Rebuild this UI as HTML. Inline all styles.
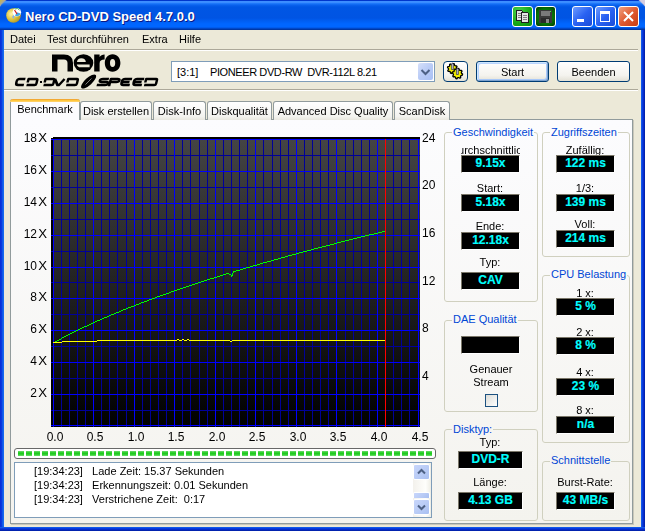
<!DOCTYPE html>
<html><head><meta charset="utf-8">
<style>
*{box-sizing:border-box}
html,body{margin:0;padding:0}
body{filter:contrast(1)}
body{width:645px;height:531px;overflow:hidden;position:relative;background:#ECE9D8;font-family:"Liberation Sans",sans-serif;font-size:11px;color:#000}
.a{position:absolute}
.title{left:0;top:0;width:645px;height:30px;border-radius:7px 7px 0 0;
background:linear-gradient(to bottom,#0036CC 0px,#0036CC 1px,#3D8EFF 1.5px,#3A8CFF 2.5px,#1E78FA 3.5px,#0A62EE 5px,#0056E4 7px,#0054E3 18px,#005EF2 21px,#0066FF 24px,#0066FF 27px,#0052DC 28px,#003DB4 29px,#003092 30px)}
.frameL{left:0;top:30px;width:4px;height:501px;background:linear-gradient(to right,#0831D9 0,#0831D9 1px,#0B46E2 2px,#166AEE 3px,#166AEE 4px)}
.frameR{left:641px;top:30px;width:4px;height:501px;background:linear-gradient(to right,#166AEE 0,#0B46E2 1px,#0831D9 2px,#001EA0 4px)}
.frameB{left:0;top:527px;width:645px;height:4px;background:linear-gradient(to bottom,#166AEE 0,#0B46E2 1px,#0831D9 2px,#001EA0 4px)}
.ttext{left:25px;top:9px;color:#fff;font-weight:bold;font-size:13px;text-shadow:1px 1px 0 #0A1883;letter-spacing:0px}
.menu{top:33px;font-size:11px}
.sep1{left:4px;top:49px;width:634px;height:1px;background:#ACA899}
.sep1w{left:4px;top:50px;width:634px;height:1px;background:#fff}
.sep2{left:4px;top:89px;width:634px;height:1px;background:#ACA899}
.sep2w{left:4px;top:90px;width:634px;height:1px;background:#fff}
.combo{left:171px;top:61px;width:264px;height:21px;border:1px solid #7F9DB9;background:#fff}
.combotext{left:177px;top:66px;white-space:pre}
.ddbtn{left:418px;top:63px;width:15px;height:17px;border-radius:2px;background:linear-gradient(135deg,#D6E0FA,#B9CBF6 50%,#A9C0F4);border:none}
.btn{height:21px;border:1px solid #003C74;border-radius:3px;background:linear-gradient(#FFFFFF,#F4F3EE 70%,#E3E1D6);text-align:center;line-height:21px}
.tab{top:101px;height:19px;border:1px solid #919B9C;border-bottom:none;border-radius:3px 3px 0 0;background:linear-gradient(#FFFFFF,#F3F3EF 80%,#E8E7DE);text-align:center;line-height:16px;padding-top:1px;white-space:nowrap}
.tabsel{top:99px;height:21px;border:1px solid #919B9C;border-top:none;border-bottom:none;border-radius:3px 3px 0 0;background:#FCFCFE;text-align:center;white-space:nowrap}
.panel{left:10px;top:119px;width:623px;height:405px;border:1px solid #919B9C;border-right-color:#919B9C;background:linear-gradient(#FCFCFE,#F4F3EE);box-shadow:1px 1px 0 #C9C7BA}
.yl{position:absolute;left:0;width:47px;text-align:right;font-size:12px;letter-spacing:0px}
.xx{display:inline-block;margin-left:2px;transform:scaleX(1.1);transform-origin:right}
.yr{position:absolute;left:422px;font-size:12px}
.xl{position:absolute;top:430px;width:40px;text-align:center;font-size:12px}
.grp{border:1px solid #D0D0BF;border-radius:3px}
.gt{color:#0046D5;background:#FAFAF9;padding:0 1px;white-space:nowrap;margin-top:1px}
.lbl{text-align:center;white-space:nowrap;overflow:hidden}
.lblc{height:14px;overflow:hidden;white-space:nowrap}
.lblc span{position:absolute;left:50%;transform:translateX(-50%)}
.val{background:#000;border:1px solid #7A7668;border-right-color:#fff;border-bottom-color:#fff;color:#00FFFF;font-weight:bold;font-size:12px;text-align:center;line-height:14px;white-space:nowrap;-webkit-text-stroke:0.15px #00FFFF}
.prog{left:14px;top:448px;width:422px;height:11px;border:1px solid #686868;border-radius:3px;background:#fff}
.log{left:14px;top:462px;width:418px;height:56px;border:1px solid #7F9DB9;background:#fff}
.logline{left:34px;white-space:pre}
.sb{border:1px solid #fff;border-radius:2px;background:linear-gradient(135deg,#C8D6FB,#B7CAF5 60%,#A8BFF2);box-shadow:inset 0 0 0 0 #fff}
</style></head><body>
<div class="a title"></div>
<div class="a frameL"></div>
<div class="a frameR"></div>
<div class="a frameB"></div>
<!-- title icon -->
<div class="a" style="left:0;top:0;width:6px;height:6px;background:linear-gradient(135deg,#C8B840 0,#B0A890 40%,transparent 60%)"></div>
<div class="a" style="left:639px;top:0;width:6px;height:6px;background:linear-gradient(225deg,#D4CCE0 0,#D4CCE0 45%,transparent 60%)"></div>
<svg class="a" style="left:0;top:0" width="26" height="28">
<defs><radialGradient id="gold" cx="0.35" cy="0.4" r="0.7"><stop offset="0" stop-color="#FFF4B0"/><stop offset="0.5" stop-color="#E0C840"/><stop offset="1" stop-color="#B09020"/></radialGradient></defs>
<circle cx="13.5" cy="15.5" r="7.3" fill="url(#gold)"/>
<path d="M12,17 L15,13 L14,19 Z" fill="#8AB0E8"/>
<circle cx="16.8" cy="12.3" r="4.3" fill="#fff"/>
<path d="M16.8,12.3 L20.6,13.5 A4,4 0 0 1 15,15.8 Z" fill="#40A8E8"/>
<path d="M14.5,10 L17,14" stroke="#D02020" stroke-width="1.2"/>
<path d="M15,9 A3.5,3.5 0 0 1 19.5,10" stroke="#40B060" stroke-width="1" fill="none"/>
</svg>
<div class="a ttext">Nero CD-DVD Speed 4.7.0.0</div>
<!-- title buttons -->
<div class="a" style="left:512px;top:6px;width:21px;height:21px;border:1px solid #fff;border-radius:3px;background:radial-gradient(circle at 30% 25%,#4CD04C,#16A816 60%,#0C900C)"></div>
<svg class="a" style="left:512px;top:6px" width="21" height="21" shape-rendering="crispEdges">
<path d="M4.5,4.5 H9.5 L10.5,5.5 V14.5 H4.5 Z" fill="#E4E4E4" stroke="#202020"/>
<path d="M5.5,7.5 H8.5 M5.5,9.5 H8.5 M5.5,11.5 H8.5" stroke="#808080"/>
<path d="M9.5,6.5 H15.5 L16.5,7.5 V16.5 H9.5 Z" fill="#E4E4E4" stroke="#202020"/>
<path d="M11,9.5 H15 M11,11.5 H15 M11,13.5 H15" stroke="#808080"/>
</svg>
<div class="a" style="left:535px;top:6px;width:21px;height:21px;border:1px solid #fff;border-radius:3px;background:radial-gradient(circle at 50% 50%,#0A9A0A,#067006 60%,#033A03)"></div>
<svg class="a" style="left:535px;top:6px" width="21" height="21" shape-rendering="crispEdges">
<rect x="4" y="4" width="13" height="13" fill="#3A3A3A"/>
<rect x="6" y="5" width="9" height="5" fill="#7A7A7A"/>
<rect x="6" y="12" width="9" height="5" fill="#2A2A2A"/>
<rect x="11" y="13" width="3" height="4" fill="#8A8A8A"/>
<rect x="15" y="5" width="1" height="1" fill="#3CFF3C"/>
</svg>
<div class="a" style="left:572px;top:6px;width:21px;height:21px;border:1px solid #fff;border-radius:3px;background:linear-gradient(135deg,#6E9CFF,#2A62F2 50%,#1A4BD8)"></div>
<div class="a" style="left:577px;top:19px;width:7px;height:3px;background:#fff"></div>
<div class="a" style="left:595px;top:6px;width:21px;height:21px;border:1px solid #fff;border-radius:3px;background:linear-gradient(135deg,#6E9CFF,#2A62F2 50%,#1A4BD8)"></div>
<div class="a" style="left:600px;top:11px;width:10px;height:11px;border:1px solid #fff;border-top-width:3px"></div>
<div class="a" style="left:618px;top:6px;width:21px;height:21px;border:1px solid #fff;border-radius:3px;background:linear-gradient(135deg,#F0A080,#E05A30 50%,#C83C10)"></div>
<svg class="a" style="left:618px;top:6px" width="21" height="21"><path d="M6 6 L15 15 M15 6 L6 15" stroke="#fff" stroke-width="2"/></svg>
<!-- menu -->
<div class="a menu" style="left:10px">Datei</div>
<div class="a menu" style="left:47px">Test durchführen</div>
<div class="a menu" style="left:142px">Extra</div>
<div class="a menu" style="left:179px">Hilfe</div>
<div class="a sep1"></div><div class="a sep1w"></div>
<!-- logo -->
<svg class="a" style="left:0;top:50px" width="170" height="40" viewBox="0 50 170 40">
<g fill="#000">
<path d="M52,71.5 V54.5 H64 Q73,54.5 73,63 V71.5 H67.5 V63 Q67.5,59.5 64,59.5 H57.5 V71.5 Z"/>
<ellipse cx="83.5" cy="63" rx="9.8" ry="8.7"/>
<path fill="#ECE9D8" d="M77,62 C77,59.8 78.8,58.2 81.4,58.2 C84,58.2 85.8,59.8 85.8,62 Z"/>
<path fill="#ECE9D8" d="M76.8,64.4 H89.6 V67.3 H80.5 C78.5,67.3 77.1,66.2 76.8,64.4 Z"/>
<path d="M94.2,71.5 V54.5 H99.6 V57 C100.6,55.2 102.2,54.4 104.6,54.4 V59.6 C101.4,59.6 99.6,60.8 99.6,63.4 V71.5 Z"/>
<path fill-rule="evenodd" d="M112.6,54.3 C117.2,54.3 120.4,58 120.4,63 C120.4,68 117.2,71.7 112.6,71.7 C108,71.7 104.8,68 104.8,63 C104.8,58 108,54.3 112.6,54.3 Z M112.6,59 C110.9,59 110,60.6 110,63 C110,65.4 110.9,67 112.6,67 C114.3,67 115.2,65.4 115.2,63 C115.2,60.6 114.3,59 112.6,59 Z"/>
</g>
<g transform="translate(0,86) skewX(-14) translate(0,-86)" fill="none" stroke="#000" stroke-width="2.5" stroke-linejoin="round">
<path d="M23.6,79 H17.8 Q15.5,79 15.5,81.3 V82.7 Q15.5,85 17.8,85 H23.6"/>
<path d="M26.8,82.5 V79 H34.5 Q35.8,79 35.8,80.3 V83.7 Q35.8,85 34.5,85 H26.3"/>
<path d="M43.8,82.5 V79 H51.5 Q52.8,79 52.8,80.3 V83.7 Q52.8,85 51.5,85 H43.3"/>
<path d="M53.2,79 L57.2,85 H58.8 L62.8,79"/>
<path d="M66.5,82.5 V79 H75 Q76.3,79 76.3,80.3 V83.7 Q76.3,85 75,85 H66"/>
<path d="M107.1,79 H101 Q98.5,79 98.5,80.5 Q98.5,82 101,82 H105 Q107.5,82 107.5,83.5 Q107.5,85 105,85 H96.5"/>
<path d="M109.1,86.2 V79 H115.5 Q118,79 118,80.5 Q118,82 115.5,82 H109.1"/>
<path d="M130.3,79 H123.2 Q120.7,79 120.7,81.5 V82.5 Q120.7,85 123.2,85 H129.5 M120.7,82 H128.5"/>
<path d="M142.4,79 H135.3 Q132.8,79 132.8,81.5 V82.5 Q132.8,85 135.3,85 H141.6 M132.8,82 H140.6"/>
<path d="M144.4,82.5 V79 H154.2 Q155.5,79 155.5,80.3 V83.7 Q155.5,85 154.2,85 H143.9"/>
</g>
<rect x="40" y="81" width="2" height="2" fill="#000"/>
<ellipse cx="88.6" cy="81.5" rx="9.6" ry="3.6" transform="rotate(-42 88.6 81.5)" fill="#000"/>
<path d="M85.5,84.5 L91.5,78.5" stroke="#888" stroke-width="0.9"/>
</svg>
<div class="a sep2"></div><div class="a sep2w"></div>
<!-- combo -->
<div class="a combo"></div>
<div class="a combotext">[3:1]</div><div class="a combotext" style="left:210px;letter-spacing:-0.4px">PIONEER DVD-RW  DVR-112L 8.21</div>
<div class="a ddbtn"></div>
<svg class="a" style="left:418px;top:63px" width="15" height="17"><path d="M3.5 7 L7.5 11 L11.5 7" stroke="#4D6185" stroke-width="2" fill="none"/></svg>
<div class="a btn" style="left:443px;top:61px;width:25px;height:21px;border-radius:4px"></div>
<svg class="a" style="left:443px;top:61px" width="25" height="21">
<path d="M14.30,8.59 L14.01,9.53 L12.63,9.78 L12.15,10.37 L12.16,11.77 L11.30,12.23 L10.15,11.43 L9.39,11.50 L8.41,12.50 L7.47,12.21 L7.22,10.83 L6.63,10.35 L5.23,10.36 L4.77,9.50 L5.57,8.35 L5.50,7.59 L4.50,6.61 L4.79,5.67 L6.17,5.42 L6.65,4.83 L6.64,3.43 L7.50,2.97 L8.65,3.77 L9.41,3.70 L10.39,2.70 L11.33,2.99 L11.58,4.37 L12.17,4.85 L13.57,4.84 L14.03,5.70 L13.23,6.85 L13.30,7.61 Z" fill="#F4F000" stroke="#000" stroke-width="1.3" stroke-linejoin="round"/>
<path d="M19.57,13.12 L19.37,14.12 L18.01,14.54 L17.56,15.21 L17.69,16.63 L16.84,17.19 L15.58,16.53 L14.79,16.68 L13.88,17.77 L12.88,17.57 L12.46,16.21 L11.79,15.76 L10.37,15.89 L9.81,15.04 L10.47,13.78 L10.32,12.99 L9.23,12.08 L9.43,11.08 L10.79,10.66 L11.24,9.99 L11.11,8.57 L11.96,8.01 L13.22,8.67 L14.01,8.52 L14.92,7.43 L15.92,7.63 L16.34,8.99 L17.01,9.44 L18.43,9.31 L18.99,10.16 L18.33,11.42 L18.48,12.21 Z" fill="#F4F000" stroke="#000" stroke-width="1.3" stroke-linejoin="round"/>
<path d="M8.4,8.5 V3.5 L9.4,1.8 L10.4,3.5 V8.5 Z" fill="#B8B8C8" stroke="#303040" stroke-width="0.7"/>
<path d="M13.4,13.5 V8.5 L14.4,6.8 L15.4,8.5 V13.5 Z" fill="#B8B8C8" stroke="#303040" stroke-width="0.7"/>
</svg>
<div class="a btn" style="left:476px;top:61px;width:73px;border-color:#003C74;box-shadow:inset 1px 1px 0 #CEE7FF,inset -1px -1px 0 #7DA2CE,inset 2px 2px 0 #B8D4FF,inset -2px -2px 0 #A8C8F8">Start</div>
<div class="a btn" style="left:557px;top:61px;width:73px">Beenden</div>
<!-- tabs -->
<div class="a panel"></div>
<div class="a tab" style="left:80px;width:72px">Disk erstellen</div>
<div class="a tab" style="left:153px;width:53px">Disk-Info</div>
<div class="a tab" style="left:207px;width:65px">Diskqualität</div>
<div class="a tab" style="left:273px;width:120px">Advanced Disc Quality</div>
<div class="a tab" style="left:394px;width:56px">ScanDisk</div>
<div class="a tabsel" style="left:10px;width:70px;line-height:18px;padding-top:1px">Benchmark</div>
<div class="a" style="left:10px;top:99px;width:70px;height:3px;border-radius:3px 3px 0 0;background:linear-gradient(#E68B2C,#FFC73C 1px,#FFC73C 2px,#FFD98A)"></div>
<!-- chart -->
<svg style="position:absolute;left:51px;top:137px" width="369" height="290" shape-rendering="crispEdges">
<defs><linearGradient id="bg" x1="0" y1="0" x2="0" y2="1"><stop offset="0" stop-color="#454545"/><stop offset="1" stop-color="#000"/></linearGradient></defs>
<rect x="0" y="0" width="369" height="290" fill="url(#bg)"/>
<rect x="0" y="0" width="2" height="1" fill="#FCFCFE"/>
<rect x="2" y="0" width="367" height="2" fill="#000"/>
<rect x="0" y="1" width="2" height="1" fill="#000"/>
<rect x="0" y="1" width="2" height="289" fill="#000"/>
<rect x="0" y="18" width="369" height="1" fill="#000099"/>
<rect x="0" y="50" width="369" height="1" fill="#000099"/>
<rect x="0" y="82" width="369" height="1" fill="#000099"/>
<rect x="0" y="114" width="369" height="1" fill="#000099"/>
<rect x="0" y="145" width="369" height="1" fill="#000099"/>
<rect x="0" y="177" width="369" height="1" fill="#000099"/>
<rect x="0" y="209" width="369" height="1" fill="#000099"/>
<rect x="0" y="241" width="369" height="1" fill="#000099"/>
<rect x="0" y="273" width="369" height="1" fill="#000099"/>
<rect x="10" y="2" width="1" height="288" fill="#000099"/>
<rect x="18" y="2" width="1" height="288" fill="#000099"/>
<rect x="26" y="2" width="1" height="288" fill="#000099"/>
<rect x="34" y="2" width="1" height="288" fill="#000099"/>
<rect x="50" y="2" width="1" height="288" fill="#000099"/>
<rect x="58" y="2" width="1" height="288" fill="#000099"/>
<rect x="66" y="2" width="1" height="288" fill="#000099"/>
<rect x="75" y="2" width="1" height="288" fill="#000099"/>
<rect x="91" y="2" width="1" height="288" fill="#000099"/>
<rect x="99" y="2" width="1" height="288" fill="#000099"/>
<rect x="107" y="2" width="1" height="288" fill="#000099"/>
<rect x="115" y="2" width="1" height="288" fill="#000099"/>
<rect x="131" y="2" width="1" height="288" fill="#000099"/>
<rect x="139" y="2" width="1" height="288" fill="#000099"/>
<rect x="148" y="2" width="1" height="288" fill="#000099"/>
<rect x="156" y="2" width="1" height="288" fill="#000099"/>
<rect x="172" y="2" width="1" height="288" fill="#000099"/>
<rect x="180" y="2" width="1" height="288" fill="#000099"/>
<rect x="188" y="2" width="1" height="288" fill="#000099"/>
<rect x="196" y="2" width="1" height="288" fill="#000099"/>
<rect x="212" y="2" width="1" height="288" fill="#000099"/>
<rect x="221" y="2" width="1" height="288" fill="#000099"/>
<rect x="229" y="2" width="1" height="288" fill="#000099"/>
<rect x="237" y="2" width="1" height="288" fill="#000099"/>
<rect x="253" y="2" width="1" height="288" fill="#000099"/>
<rect x="261" y="2" width="1" height="288" fill="#000099"/>
<rect x="269" y="2" width="1" height="288" fill="#000099"/>
<rect x="277" y="2" width="1" height="288" fill="#000099"/>
<rect x="294" y="2" width="1" height="288" fill="#000099"/>
<rect x="302" y="2" width="1" height="288" fill="#000099"/>
<rect x="310" y="2" width="1" height="288" fill="#000099"/>
<rect x="318" y="2" width="1" height="288" fill="#000099"/>
<rect x="334" y="2" width="1" height="288" fill="#000099"/>
<rect x="342" y="2" width="1" height="288" fill="#000099"/>
<rect x="350" y="2" width="1" height="288" fill="#000099"/>
<rect x="358" y="2" width="1" height="288" fill="#000099"/>
<rect x="0" y="2" width="369" height="1" fill="#0000ff"/>
<rect x="0" y="34" width="369" height="1" fill="#0000ff"/>
<rect x="0" y="66" width="369" height="1" fill="#0000ff"/>
<rect x="0" y="98" width="369" height="1" fill="#0000ff"/>
<rect x="0" y="130" width="369" height="1" fill="#0000ff"/>
<rect x="0" y="161" width="369" height="1" fill="#0000ff"/>
<rect x="0" y="193" width="369" height="1" fill="#0000ff"/>
<rect x="0" y="225" width="369" height="1" fill="#0000ff"/>
<rect x="0" y="257" width="369" height="1" fill="#0000ff"/>
<rect x="0" y="288" width="369" height="1" fill="#0000ff"/>
<rect x="2" y="2" width="1" height="288" fill="#0000ff"/>
<rect x="42" y="2" width="1" height="288" fill="#0000ff"/>
<rect x="83" y="2" width="1" height="288" fill="#0000ff"/>
<rect x="123" y="2" width="1" height="288" fill="#0000ff"/>
<rect x="164" y="2" width="1" height="288" fill="#0000ff"/>
<rect x="204" y="2" width="1" height="288" fill="#0000ff"/>
<rect x="245" y="2" width="1" height="288" fill="#0000ff"/>
<rect x="285" y="2" width="1" height="288" fill="#0000ff"/>
<rect x="326" y="2" width="1" height="288" fill="#0000ff"/>
<rect x="367" y="2" width="1" height="288" fill="#0000ff"/>
<rect x="367" y="2" width="1" height="288" fill="#0000ff"/>
<rect x="334" y="2" width="1" height="288" fill="#ff0000"/>
<rect x="2" y="205" width="1" height="1" fill="#00FF00"/>
<rect x="3" y="205" width="1" height="1" fill="#00FF00"/>
<rect x="4" y="204" width="1" height="1" fill="#00FF00"/>
<rect x="5" y="204" width="1" height="1" fill="#00FF00"/>
<rect x="6" y="203" width="1" height="1" fill="#00FF00"/>
<rect x="7" y="203" width="1" height="1" fill="#00FF00"/>
<rect x="8" y="202" width="1" height="1" fill="#00FF00"/>
<rect x="9" y="202" width="1" height="1" fill="#00FF00"/>
<rect x="10" y="201" width="1" height="1" fill="#00FF00"/>
<rect x="11" y="200" width="1" height="1" fill="#00FF00"/>
<rect x="12" y="200" width="1" height="1" fill="#00FF00"/>
<rect x="13" y="199" width="1" height="1" fill="#00FF00"/>
<rect x="14" y="199" width="1" height="1" fill="#00FF00"/>
<rect x="15" y="198" width="1" height="1" fill="#00FF00"/>
<rect x="16" y="198" width="1" height="1" fill="#00FF00"/>
<rect x="17" y="197" width="1" height="1" fill="#00FF00"/>
<rect x="18" y="197" width="1" height="1" fill="#00FF00"/>
<rect x="19" y="196" width="1" height="1" fill="#00FF00"/>
<rect x="20" y="196" width="1" height="1" fill="#00FF00"/>
<rect x="21" y="195" width="1" height="1" fill="#00FF00"/>
<rect x="22" y="195" width="1" height="1" fill="#00FF00"/>
<rect x="23" y="194" width="1" height="1" fill="#00FF00"/>
<rect x="24" y="194" width="1" height="1" fill="#00FF00"/>
<rect x="25" y="193" width="1" height="1" fill="#00FF00"/>
<rect x="26" y="193" width="1" height="1" fill="#00FF00"/>
<rect x="27" y="192" width="1" height="1" fill="#00FF00"/>
<rect x="28" y="192" width="1" height="1" fill="#00FF00"/>
<rect x="29" y="191" width="1" height="1" fill="#00FF00"/>
<rect x="30" y="191" width="1" height="1" fill="#00FF00"/>
<rect x="31" y="190" width="1" height="1" fill="#00FF00"/>
<rect x="32" y="190" width="1" height="1" fill="#00FF00"/>
<rect x="33" y="189" width="1" height="1" fill="#00FF00"/>
<rect x="34" y="189" width="1" height="1" fill="#00FF00"/>
<rect x="35" y="189" width="1" height="1" fill="#00FF00"/>
<rect x="36" y="188" width="1" height="1" fill="#00FF00"/>
<rect x="37" y="188" width="1" height="1" fill="#00FF00"/>
<rect x="38" y="187" width="1" height="1" fill="#00FF00"/>
<rect x="39" y="187" width="1" height="1" fill="#00FF00"/>
<rect x="40" y="186" width="1" height="1" fill="#00FF00"/>
<rect x="41" y="186" width="1" height="1" fill="#00FF00"/>
<rect x="42" y="185" width="1" height="1" fill="#00FF00"/>
<rect x="43" y="185" width="1" height="1" fill="#00FF00"/>
<rect x="44" y="184" width="1" height="1" fill="#00FF00"/>
<rect x="45" y="184" width="1" height="1" fill="#00FF00"/>
<rect x="46" y="183" width="1" height="1" fill="#00FF00"/>
<rect x="47" y="183" width="1" height="1" fill="#00FF00"/>
<rect x="48" y="183" width="1" height="1" fill="#00FF00"/>
<rect x="49" y="182" width="1" height="1" fill="#00FF00"/>
<rect x="50" y="182" width="1" height="1" fill="#00FF00"/>
<rect x="51" y="181" width="1" height="1" fill="#00FF00"/>
<rect x="52" y="181" width="1" height="1" fill="#00FF00"/>
<rect x="53" y="180" width="1" height="1" fill="#00FF00"/>
<rect x="54" y="180" width="1" height="1" fill="#00FF00"/>
<rect x="55" y="180" width="1" height="1" fill="#00FF00"/>
<rect x="56" y="179" width="1" height="1" fill="#00FF00"/>
<rect x="57" y="179" width="1" height="1" fill="#00FF00"/>
<rect x="58" y="178" width="1" height="1" fill="#00FF00"/>
<rect x="59" y="178" width="1" height="1" fill="#00FF00"/>
<rect x="60" y="177" width="1" height="1" fill="#00FF00"/>
<rect x="61" y="177" width="1" height="1" fill="#00FF00"/>
<rect x="62" y="177" width="1" height="1" fill="#00FF00"/>
<rect x="63" y="176" width="1" height="1" fill="#00FF00"/>
<rect x="64" y="176" width="1" height="1" fill="#00FF00"/>
<rect x="65" y="175" width="1" height="1" fill="#00FF00"/>
<rect x="66" y="175" width="1" height="1" fill="#00FF00"/>
<rect x="67" y="175" width="1" height="1" fill="#00FF00"/>
<rect x="68" y="174" width="1" height="1" fill="#00FF00"/>
<rect x="69" y="174" width="1" height="1" fill="#00FF00"/>
<rect x="70" y="173" width="1" height="1" fill="#00FF00"/>
<rect x="71" y="173" width="1" height="1" fill="#00FF00"/>
<rect x="72" y="172" width="1" height="1" fill="#00FF00"/>
<rect x="73" y="172" width="1" height="1" fill="#00FF00"/>
<rect x="74" y="172" width="1" height="1" fill="#00FF00"/>
<rect x="75" y="171" width="1" height="1" fill="#00FF00"/>
<rect x="76" y="171" width="1" height="1" fill="#00FF00"/>
<rect x="77" y="170" width="1" height="1" fill="#00FF00"/>
<rect x="78" y="170" width="1" height="1" fill="#00FF00"/>
<rect x="79" y="170" width="1" height="1" fill="#00FF00"/>
<rect x="80" y="169" width="1" height="1" fill="#00FF00"/>
<rect x="81" y="169" width="1" height="1" fill="#00FF00"/>
<rect x="82" y="169" width="1" height="1" fill="#00FF00"/>
<rect x="83" y="168" width="1" height="1" fill="#00FF00"/>
<rect x="84" y="168" width="1" height="1" fill="#00FF00"/>
<rect x="85" y="167" width="1" height="1" fill="#00FF00"/>
<rect x="86" y="167" width="1" height="1" fill="#00FF00"/>
<rect x="87" y="167" width="1" height="1" fill="#00FF00"/>
<rect x="88" y="166" width="1" height="1" fill="#00FF00"/>
<rect x="89" y="166" width="1" height="1" fill="#00FF00"/>
<rect x="90" y="165" width="1" height="1" fill="#00FF00"/>
<rect x="91" y="165" width="1" height="1" fill="#00FF00"/>
<rect x="92" y="165" width="1" height="1" fill="#00FF00"/>
<rect x="93" y="164" width="1" height="1" fill="#00FF00"/>
<rect x="94" y="164" width="1" height="1" fill="#00FF00"/>
<rect x="95" y="164" width="1" height="1" fill="#00FF00"/>
<rect x="96" y="163" width="1" height="1" fill="#00FF00"/>
<rect x="97" y="163" width="1" height="1" fill="#00FF00"/>
<rect x="98" y="162" width="1" height="1" fill="#00FF00"/>
<rect x="99" y="162" width="1" height="1" fill="#00FF00"/>
<rect x="100" y="162" width="1" height="1" fill="#00FF00"/>
<rect x="101" y="161" width="1" height="1" fill="#00FF00"/>
<rect x="102" y="161" width="1" height="1" fill="#00FF00"/>
<rect x="103" y="161" width="1" height="1" fill="#00FF00"/>
<rect x="104" y="160" width="1" height="1" fill="#00FF00"/>
<rect x="105" y="160" width="1" height="1" fill="#00FF00"/>
<rect x="106" y="159" width="1" height="1" fill="#00FF00"/>
<rect x="107" y="159" width="1" height="1" fill="#00FF00"/>
<rect x="108" y="159" width="1" height="1" fill="#00FF00"/>
<rect x="109" y="158" width="1" height="1" fill="#00FF00"/>
<rect x="110" y="158" width="1" height="1" fill="#00FF00"/>
<rect x="111" y="158" width="1" height="1" fill="#00FF00"/>
<rect x="112" y="157" width="1" height="1" fill="#00FF00"/>
<rect x="113" y="157" width="1" height="1" fill="#00FF00"/>
<rect x="114" y="157" width="1" height="1" fill="#00FF00"/>
<rect x="115" y="156" width="1" height="1" fill="#00FF00"/>
<rect x="116" y="156" width="1" height="1" fill="#00FF00"/>
<rect x="117" y="156" width="1" height="1" fill="#00FF00"/>
<rect x="118" y="155" width="1" height="1" fill="#00FF00"/>
<rect x="119" y="155" width="1" height="1" fill="#00FF00"/>
<rect x="120" y="154" width="1" height="1" fill="#00FF00"/>
<rect x="121" y="154" width="1" height="1" fill="#00FF00"/>
<rect x="122" y="154" width="1" height="1" fill="#00FF00"/>
<rect x="123" y="153" width="1" height="1" fill="#00FF00"/>
<rect x="124" y="153" width="1" height="1" fill="#00FF00"/>
<rect x="125" y="153" width="1" height="1" fill="#00FF00"/>
<rect x="126" y="152" width="1" height="1" fill="#00FF00"/>
<rect x="127" y="152" width="1" height="1" fill="#00FF00"/>
<rect x="128" y="152" width="1" height="1" fill="#00FF00"/>
<rect x="129" y="151" width="1" height="1" fill="#00FF00"/>
<rect x="130" y="151" width="1" height="1" fill="#00FF00"/>
<rect x="131" y="151" width="1" height="1" fill="#00FF00"/>
<rect x="132" y="150" width="1" height="1" fill="#00FF00"/>
<rect x="133" y="150" width="1" height="1" fill="#00FF00"/>
<rect x="134" y="150" width="1" height="1" fill="#00FF00"/>
<rect x="135" y="149" width="1" height="1" fill="#00FF00"/>
<rect x="136" y="149" width="1" height="1" fill="#00FF00"/>
<rect x="137" y="149" width="1" height="1" fill="#00FF00"/>
<rect x="138" y="148" width="1" height="1" fill="#00FF00"/>
<rect x="139" y="148" width="1" height="1" fill="#00FF00"/>
<rect x="140" y="148" width="1" height="1" fill="#00FF00"/>
<rect x="141" y="147" width="1" height="1" fill="#00FF00"/>
<rect x="142" y="147" width="1" height="1" fill="#00FF00"/>
<rect x="143" y="147" width="1" height="1" fill="#00FF00"/>
<rect x="144" y="146" width="1" height="1" fill="#00FF00"/>
<rect x="145" y="146" width="1" height="1" fill="#00FF00"/>
<rect x="146" y="146" width="1" height="1" fill="#00FF00"/>
<rect x="147" y="145" width="1" height="1" fill="#00FF00"/>
<rect x="148" y="145" width="1" height="1" fill="#00FF00"/>
<rect x="149" y="145" width="1" height="1" fill="#00FF00"/>
<rect x="150" y="144" width="1" height="1" fill="#00FF00"/>
<rect x="151" y="144" width="1" height="1" fill="#00FF00"/>
<rect x="152" y="144" width="1" height="1" fill="#00FF00"/>
<rect x="153" y="143" width="1" height="1" fill="#00FF00"/>
<rect x="154" y="143" width="1" height="1" fill="#00FF00"/>
<rect x="155" y="143" width="1" height="1" fill="#00FF00"/>
<rect x="156" y="142" width="1" height="1" fill="#00FF00"/>
<rect x="157" y="142" width="1" height="1" fill="#00FF00"/>
<rect x="158" y="142" width="1" height="1" fill="#00FF00"/>
<rect x="159" y="141" width="1" height="1" fill="#00FF00"/>
<rect x="160" y="141" width="1" height="1" fill="#00FF00"/>
<rect x="161" y="141" width="1" height="1" fill="#00FF00"/>
<rect x="162" y="141" width="1" height="1" fill="#00FF00"/>
<rect x="163" y="140" width="1" height="1" fill="#00FF00"/>
<rect x="164" y="140" width="1" height="1" fill="#00FF00"/>
<rect x="165" y="140" width="1" height="1" fill="#00FF00"/>
<rect x="166" y="139" width="1" height="1" fill="#00FF00"/>
<rect x="167" y="139" width="1" height="1" fill="#00FF00"/>
<rect x="168" y="139" width="1" height="1" fill="#00FF00"/>
<rect x="169" y="138" width="1" height="1" fill="#00FF00"/>
<rect x="170" y="138" width="1" height="1" fill="#00FF00"/>
<rect x="171" y="138" width="1" height="1" fill="#00FF00"/>
<rect x="172" y="137" width="1" height="1" fill="#00FF00"/>
<rect x="173" y="137" width="1" height="1" fill="#00FF00"/>
<rect x="174" y="137" width="1" height="1" fill="#00FF00"/>
<rect x="175" y="136" width="1" height="1" fill="#00FF00"/>
<rect x="176" y="136" width="1" height="1" fill="#00FF00"/>
<rect x="177" y="136" width="1" height="1" fill="#00FF00"/>
<rect x="178" y="137" width="1" height="1" fill="#00FF00"/>
<rect x="179" y="137" width="1" height="1" fill="#00FF00"/>
<rect x="180" y="138" width="1" height="2" fill="#00FF00"/>
<rect x="181" y="136" width="1" height="3" fill="#00FF00"/>
<rect x="182" y="134" width="1" height="2" fill="#00FF00"/>
<rect x="183" y="134" width="1" height="1" fill="#00FF00"/>
<rect x="184" y="134" width="1" height="1" fill="#00FF00"/>
<rect x="185" y="133" width="1" height="1" fill="#00FF00"/>
<rect x="186" y="133" width="1" height="1" fill="#00FF00"/>
<rect x="187" y="133" width="1" height="1" fill="#00FF00"/>
<rect x="188" y="133" width="1" height="1" fill="#00FF00"/>
<rect x="189" y="132" width="1" height="1" fill="#00FF00"/>
<rect x="190" y="132" width="1" height="1" fill="#00FF00"/>
<rect x="191" y="132" width="1" height="1" fill="#00FF00"/>
<rect x="192" y="131" width="1" height="1" fill="#00FF00"/>
<rect x="193" y="131" width="1" height="1" fill="#00FF00"/>
<rect x="194" y="131" width="1" height="1" fill="#00FF00"/>
<rect x="195" y="130" width="1" height="1" fill="#00FF00"/>
<rect x="196" y="130" width="1" height="1" fill="#00FF00"/>
<rect x="197" y="130" width="1" height="1" fill="#00FF00"/>
<rect x="198" y="130" width="1" height="1" fill="#00FF00"/>
<rect x="199" y="129" width="1" height="1" fill="#00FF00"/>
<rect x="200" y="129" width="1" height="1" fill="#00FF00"/>
<rect x="201" y="129" width="1" height="1" fill="#00FF00"/>
<rect x="202" y="128" width="1" height="1" fill="#00FF00"/>
<rect x="203" y="128" width="1" height="1" fill="#00FF00"/>
<rect x="204" y="128" width="1" height="1" fill="#00FF00"/>
<rect x="205" y="128" width="1" height="1" fill="#00FF00"/>
<rect x="206" y="127" width="1" height="1" fill="#00FF00"/>
<rect x="207" y="127" width="1" height="1" fill="#00FF00"/>
<rect x="208" y="127" width="1" height="1" fill="#00FF00"/>
<rect x="209" y="126" width="1" height="1" fill="#00FF00"/>
<rect x="210" y="126" width="1" height="1" fill="#00FF00"/>
<rect x="211" y="126" width="1" height="1" fill="#00FF00"/>
<rect x="212" y="125" width="1" height="1" fill="#00FF00"/>
<rect x="213" y="125" width="1" height="1" fill="#00FF00"/>
<rect x="214" y="125" width="1" height="1" fill="#00FF00"/>
<rect x="215" y="125" width="1" height="1" fill="#00FF00"/>
<rect x="216" y="124" width="1" height="1" fill="#00FF00"/>
<rect x="217" y="124" width="1" height="1" fill="#00FF00"/>
<rect x="218" y="124" width="1" height="1" fill="#00FF00"/>
<rect x="219" y="124" width="1" height="1" fill="#00FF00"/>
<rect x="220" y="123" width="1" height="1" fill="#00FF00"/>
<rect x="221" y="123" width="1" height="1" fill="#00FF00"/>
<rect x="222" y="123" width="1" height="1" fill="#00FF00"/>
<rect x="223" y="122" width="1" height="1" fill="#00FF00"/>
<rect x="224" y="122" width="1" height="1" fill="#00FF00"/>
<rect x="225" y="122" width="1" height="1" fill="#00FF00"/>
<rect x="226" y="122" width="1" height="1" fill="#00FF00"/>
<rect x="227" y="121" width="1" height="1" fill="#00FF00"/>
<rect x="228" y="121" width="1" height="1" fill="#00FF00"/>
<rect x="229" y="121" width="1" height="1" fill="#00FF00"/>
<rect x="230" y="120" width="1" height="1" fill="#00FF00"/>
<rect x="231" y="120" width="1" height="1" fill="#00FF00"/>
<rect x="232" y="120" width="1" height="1" fill="#00FF00"/>
<rect x="233" y="120" width="1" height="1" fill="#00FF00"/>
<rect x="234" y="119" width="1" height="1" fill="#00FF00"/>
<rect x="235" y="119" width="1" height="1" fill="#00FF00"/>
<rect x="236" y="119" width="1" height="1" fill="#00FF00"/>
<rect x="237" y="118" width="1" height="1" fill="#00FF00"/>
<rect x="238" y="118" width="1" height="1" fill="#00FF00"/>
<rect x="239" y="118" width="1" height="1" fill="#00FF00"/>
<rect x="240" y="118" width="1" height="1" fill="#00FF00"/>
<rect x="241" y="117" width="1" height="1" fill="#00FF00"/>
<rect x="242" y="117" width="1" height="1" fill="#00FF00"/>
<rect x="243" y="117" width="1" height="1" fill="#00FF00"/>
<rect x="244" y="117" width="1" height="1" fill="#00FF00"/>
<rect x="245" y="116" width="1" height="1" fill="#00FF00"/>
<rect x="246" y="116" width="1" height="1" fill="#00FF00"/>
<rect x="247" y="116" width="1" height="1" fill="#00FF00"/>
<rect x="248" y="115" width="1" height="1" fill="#00FF00"/>
<rect x="249" y="115" width="1" height="1" fill="#00FF00"/>
<rect x="250" y="115" width="1" height="1" fill="#00FF00"/>
<rect x="251" y="115" width="1" height="1" fill="#00FF00"/>
<rect x="252" y="114" width="1" height="1" fill="#00FF00"/>
<rect x="253" y="114" width="1" height="1" fill="#00FF00"/>
<rect x="254" y="114" width="1" height="1" fill="#00FF00"/>
<rect x="255" y="114" width="1" height="1" fill="#00FF00"/>
<rect x="256" y="113" width="1" height="1" fill="#00FF00"/>
<rect x="257" y="113" width="1" height="1" fill="#00FF00"/>
<rect x="258" y="113" width="1" height="1" fill="#00FF00"/>
<rect x="259" y="113" width="1" height="1" fill="#00FF00"/>
<rect x="260" y="112" width="1" height="1" fill="#00FF00"/>
<rect x="261" y="112" width="1" height="1" fill="#00FF00"/>
<rect x="262" y="112" width="1" height="1" fill="#00FF00"/>
<rect x="263" y="111" width="1" height="1" fill="#00FF00"/>
<rect x="264" y="111" width="1" height="1" fill="#00FF00"/>
<rect x="265" y="111" width="1" height="1" fill="#00FF00"/>
<rect x="266" y="111" width="1" height="1" fill="#00FF00"/>
<rect x="267" y="110" width="1" height="1" fill="#00FF00"/>
<rect x="268" y="110" width="1" height="1" fill="#00FF00"/>
<rect x="269" y="110" width="1" height="1" fill="#00FF00"/>
<rect x="270" y="110" width="1" height="1" fill="#00FF00"/>
<rect x="271" y="109" width="1" height="1" fill="#00FF00"/>
<rect x="272" y="109" width="1" height="1" fill="#00FF00"/>
<rect x="273" y="109" width="1" height="1" fill="#00FF00"/>
<rect x="274" y="109" width="1" height="1" fill="#00FF00"/>
<rect x="275" y="108" width="1" height="1" fill="#00FF00"/>
<rect x="276" y="108" width="1" height="1" fill="#00FF00"/>
<rect x="277" y="108" width="1" height="1" fill="#00FF00"/>
<rect x="278" y="108" width="1" height="1" fill="#00FF00"/>
<rect x="279" y="107" width="1" height="1" fill="#00FF00"/>
<rect x="280" y="107" width="1" height="1" fill="#00FF00"/>
<rect x="281" y="107" width="1" height="1" fill="#00FF00"/>
<rect x="282" y="107" width="1" height="1" fill="#00FF00"/>
<rect x="283" y="106" width="1" height="1" fill="#00FF00"/>
<rect x="284" y="106" width="1" height="1" fill="#00FF00"/>
<rect x="285" y="106" width="1" height="1" fill="#00FF00"/>
<rect x="286" y="105" width="1" height="1" fill="#00FF00"/>
<rect x="287" y="105" width="1" height="1" fill="#00FF00"/>
<rect x="288" y="105" width="1" height="1" fill="#00FF00"/>
<rect x="289" y="105" width="1" height="1" fill="#00FF00"/>
<rect x="290" y="104" width="1" height="1" fill="#00FF00"/>
<rect x="291" y="104" width="1" height="1" fill="#00FF00"/>
<rect x="292" y="104" width="1" height="1" fill="#00FF00"/>
<rect x="293" y="104" width="1" height="1" fill="#00FF00"/>
<rect x="294" y="103" width="1" height="1" fill="#00FF00"/>
<rect x="295" y="103" width="1" height="1" fill="#00FF00"/>
<rect x="296" y="103" width="1" height="1" fill="#00FF00"/>
<rect x="297" y="103" width="1" height="1" fill="#00FF00"/>
<rect x="298" y="102" width="1" height="1" fill="#00FF00"/>
<rect x="299" y="102" width="1" height="1" fill="#00FF00"/>
<rect x="300" y="102" width="1" height="1" fill="#00FF00"/>
<rect x="301" y="102" width="1" height="1" fill="#00FF00"/>
<rect x="302" y="101" width="1" height="1" fill="#00FF00"/>
<rect x="303" y="101" width="1" height="1" fill="#00FF00"/>
<rect x="304" y="101" width="1" height="1" fill="#00FF00"/>
<rect x="305" y="101" width="1" height="1" fill="#00FF00"/>
<rect x="306" y="100" width="1" height="1" fill="#00FF00"/>
<rect x="307" y="100" width="1" height="1" fill="#00FF00"/>
<rect x="308" y="100" width="1" height="1" fill="#00FF00"/>
<rect x="309" y="100" width="1" height="1" fill="#00FF00"/>
<rect x="310" y="99" width="1" height="1" fill="#00FF00"/>
<rect x="311" y="99" width="1" height="1" fill="#00FF00"/>
<rect x="312" y="99" width="1" height="1" fill="#00FF00"/>
<rect x="313" y="99" width="1" height="1" fill="#00FF00"/>
<rect x="314" y="98" width="1" height="1" fill="#00FF00"/>
<rect x="315" y="98" width="1" height="1" fill="#00FF00"/>
<rect x="316" y="98" width="1" height="1" fill="#00FF00"/>
<rect x="317" y="98" width="1" height="1" fill="#00FF00"/>
<rect x="318" y="97" width="1" height="1" fill="#00FF00"/>
<rect x="319" y="97" width="1" height="1" fill="#00FF00"/>
<rect x="320" y="97" width="1" height="1" fill="#00FF00"/>
<rect x="321" y="97" width="1" height="1" fill="#00FF00"/>
<rect x="322" y="97" width="1" height="1" fill="#00FF00"/>
<rect x="323" y="96" width="1" height="1" fill="#00FF00"/>
<rect x="324" y="96" width="1" height="1" fill="#00FF00"/>
<rect x="325" y="96" width="1" height="1" fill="#00FF00"/>
<rect x="326" y="96" width="1" height="1" fill="#00FF00"/>
<rect x="327" y="95" width="1" height="1" fill="#00FF00"/>
<rect x="328" y="95" width="1" height="1" fill="#00FF00"/>
<rect x="329" y="95" width="1" height="1" fill="#00FF00"/>
<rect x="330" y="95" width="1" height="1" fill="#00FF00"/>
<rect x="331" y="94" width="1" height="1" fill="#00FF00"/>
<rect x="332" y="94" width="1" height="1" fill="#00FF00"/>
<rect x="333" y="94" width="1" height="1" fill="#00FF00"/>
<rect x="2" y="205" width="1" height="1" fill="#FFFF00"/>
<rect x="3" y="205" width="1" height="1" fill="#FFFF00"/>
<rect x="4" y="205" width="1" height="1" fill="#FFFF00"/>
<rect x="5" y="205" width="1" height="1" fill="#FFFF00"/>
<rect x="6" y="205" width="1" height="1" fill="#FFFF00"/>
<rect x="7" y="205" width="1" height="1" fill="#FFFF00"/>
<rect x="8" y="205" width="1" height="1" fill="#FFFF00"/>
<rect x="9" y="205" width="1" height="1" fill="#FFFF00"/>
<rect x="10" y="205" width="1" height="1" fill="#FFFF00"/>
<rect x="11" y="204" width="1" height="1" fill="#FFFF00"/>
<rect x="12" y="204" width="1" height="1" fill="#FFFF00"/>
<rect x="13" y="204" width="1" height="1" fill="#FFFF00"/>
<rect x="14" y="204" width="1" height="1" fill="#FFFF00"/>
<rect x="15" y="204" width="1" height="1" fill="#FFFF00"/>
<rect x="16" y="204" width="1" height="1" fill="#FFFF00"/>
<rect x="17" y="204" width="1" height="1" fill="#FFFF00"/>
<rect x="18" y="204" width="1" height="1" fill="#FFFF00"/>
<rect x="19" y="204" width="1" height="1" fill="#FFFF00"/>
<rect x="20" y="204" width="1" height="1" fill="#FFFF00"/>
<rect x="21" y="204" width="1" height="1" fill="#FFFF00"/>
<rect x="22" y="204" width="1" height="1" fill="#FFFF00"/>
<rect x="23" y="204" width="1" height="1" fill="#FFFF00"/>
<rect x="24" y="204" width="1" height="1" fill="#FFFF00"/>
<rect x="25" y="204" width="1" height="1" fill="#FFFF00"/>
<rect x="26" y="204" width="1" height="1" fill="#FFFF00"/>
<rect x="27" y="204" width="1" height="1" fill="#FFFF00"/>
<rect x="28" y="204" width="1" height="1" fill="#FFFF00"/>
<rect x="29" y="204" width="1" height="1" fill="#FFFF00"/>
<rect x="30" y="204" width="1" height="1" fill="#FFFF00"/>
<rect x="31" y="204" width="1" height="1" fill="#FFFF00"/>
<rect x="32" y="204" width="1" height="1" fill="#FFFF00"/>
<rect x="33" y="204" width="1" height="1" fill="#FFFF00"/>
<rect x="34" y="204" width="1" height="1" fill="#FFFF00"/>
<rect x="35" y="204" width="1" height="1" fill="#FFFF00"/>
<rect x="36" y="204" width="1" height="1" fill="#FFFF00"/>
<rect x="37" y="204" width="1" height="1" fill="#FFFF00"/>
<rect x="38" y="204" width="1" height="1" fill="#FFFF00"/>
<rect x="39" y="204" width="1" height="1" fill="#FFFF00"/>
<rect x="40" y="204" width="1" height="1" fill="#FFFF00"/>
<rect x="41" y="204" width="1" height="1" fill="#FFFF00"/>
<rect x="42" y="204" width="1" height="1" fill="#FFFF00"/>
<rect x="43" y="204" width="1" height="1" fill="#FFFF00"/>
<rect x="44" y="204" width="1" height="1" fill="#FFFF00"/>
<rect x="45" y="204" width="1" height="1" fill="#FFFF00"/>
<rect x="46" y="203" width="1" height="1" fill="#FFFF00"/>
<rect x="47" y="203" width="1" height="1" fill="#FFFF00"/>
<rect x="48" y="203" width="1" height="1" fill="#FFFF00"/>
<rect x="49" y="203" width="1" height="1" fill="#FFFF00"/>
<rect x="50" y="203" width="1" height="1" fill="#FFFF00"/>
<rect x="51" y="203" width="1" height="1" fill="#FFFF00"/>
<rect x="52" y="203" width="1" height="1" fill="#FFFF00"/>
<rect x="53" y="203" width="1" height="1" fill="#FFFF00"/>
<rect x="54" y="203" width="1" height="1" fill="#FFFF00"/>
<rect x="55" y="203" width="1" height="1" fill="#FFFF00"/>
<rect x="56" y="203" width="1" height="1" fill="#FFFF00"/>
<rect x="57" y="203" width="1" height="1" fill="#FFFF00"/>
<rect x="58" y="203" width="1" height="1" fill="#FFFF00"/>
<rect x="59" y="203" width="1" height="1" fill="#FFFF00"/>
<rect x="60" y="203" width="1" height="1" fill="#FFFF00"/>
<rect x="61" y="203" width="1" height="1" fill="#FFFF00"/>
<rect x="62" y="203" width="1" height="1" fill="#FFFF00"/>
<rect x="63" y="203" width="1" height="1" fill="#FFFF00"/>
<rect x="64" y="203" width="1" height="1" fill="#FFFF00"/>
<rect x="65" y="203" width="1" height="1" fill="#FFFF00"/>
<rect x="66" y="203" width="1" height="1" fill="#FFFF00"/>
<rect x="67" y="203" width="1" height="1" fill="#FFFF00"/>
<rect x="68" y="203" width="1" height="1" fill="#FFFF00"/>
<rect x="69" y="203" width="1" height="1" fill="#FFFF00"/>
<rect x="70" y="203" width="1" height="1" fill="#FFFF00"/>
<rect x="71" y="203" width="1" height="1" fill="#FFFF00"/>
<rect x="72" y="203" width="1" height="1" fill="#FFFF00"/>
<rect x="73" y="203" width="1" height="1" fill="#FFFF00"/>
<rect x="74" y="203" width="1" height="1" fill="#FFFF00"/>
<rect x="75" y="203" width="1" height="1" fill="#FFFF00"/>
<rect x="76" y="203" width="1" height="1" fill="#FFFF00"/>
<rect x="77" y="203" width="1" height="1" fill="#FFFF00"/>
<rect x="78" y="203" width="1" height="1" fill="#FFFF00"/>
<rect x="79" y="203" width="1" height="1" fill="#FFFF00"/>
<rect x="80" y="203" width="1" height="1" fill="#FFFF00"/>
<rect x="81" y="203" width="1" height="1" fill="#FFFF00"/>
<rect x="82" y="203" width="1" height="1" fill="#FFFF00"/>
<rect x="83" y="203" width="1" height="1" fill="#FFFF00"/>
<rect x="84" y="203" width="1" height="1" fill="#FFFF00"/>
<rect x="85" y="203" width="1" height="1" fill="#FFFF00"/>
<rect x="86" y="203" width="1" height="1" fill="#FFFF00"/>
<rect x="87" y="203" width="1" height="1" fill="#FFFF00"/>
<rect x="88" y="203" width="1" height="1" fill="#FFFF00"/>
<rect x="89" y="203" width="1" height="1" fill="#FFFF00"/>
<rect x="90" y="203" width="1" height="1" fill="#FFFF00"/>
<rect x="91" y="203" width="1" height="1" fill="#FFFF00"/>
<rect x="92" y="203" width="1" height="1" fill="#FFFF00"/>
<rect x="93" y="203" width="1" height="1" fill="#FFFF00"/>
<rect x="94" y="203" width="1" height="1" fill="#FFFF00"/>
<rect x="95" y="203" width="1" height="1" fill="#FFFF00"/>
<rect x="96" y="203" width="1" height="1" fill="#FFFF00"/>
<rect x="97" y="203" width="1" height="1" fill="#FFFF00"/>
<rect x="98" y="203" width="1" height="1" fill="#FFFF00"/>
<rect x="99" y="203" width="1" height="1" fill="#FFFF00"/>
<rect x="100" y="203" width="1" height="1" fill="#FFFF00"/>
<rect x="101" y="203" width="1" height="1" fill="#FFFF00"/>
<rect x="102" y="203" width="1" height="1" fill="#FFFF00"/>
<rect x="103" y="203" width="1" height="1" fill="#FFFF00"/>
<rect x="104" y="203" width="1" height="1" fill="#FFFF00"/>
<rect x="105" y="203" width="1" height="1" fill="#FFFF00"/>
<rect x="106" y="203" width="1" height="1" fill="#FFFF00"/>
<rect x="107" y="203" width="1" height="1" fill="#FFFF00"/>
<rect x="108" y="203" width="1" height="1" fill="#FFFF00"/>
<rect x="109" y="203" width="1" height="1" fill="#FFFF00"/>
<rect x="110" y="203" width="1" height="1" fill="#FFFF00"/>
<rect x="111" y="203" width="1" height="1" fill="#FFFF00"/>
<rect x="112" y="203" width="1" height="1" fill="#FFFF00"/>
<rect x="113" y="203" width="1" height="1" fill="#FFFF00"/>
<rect x="114" y="203" width="1" height="1" fill="#FFFF00"/>
<rect x="115" y="203" width="1" height="1" fill="#FFFF00"/>
<rect x="116" y="203" width="1" height="1" fill="#FFFF00"/>
<rect x="117" y="203" width="1" height="1" fill="#FFFF00"/>
<rect x="118" y="203" width="1" height="1" fill="#FFFF00"/>
<rect x="119" y="203" width="1" height="1" fill="#FFFF00"/>
<rect x="120" y="203" width="1" height="1" fill="#FFFF00"/>
<rect x="121" y="203" width="1" height="1" fill="#FFFF00"/>
<rect x="122" y="203" width="1" height="1" fill="#FFFF00"/>
<rect x="123" y="203" width="1" height="1" fill="#FFFF00"/>
<rect x="124" y="203" width="1" height="1" fill="#FFFF00"/>
<rect x="125" y="203" width="1" height="1" fill="#FFFF00"/>
<rect x="126" y="202" width="1" height="1" fill="#FFFF00"/>
<rect x="127" y="202" width="1" height="1" fill="#FFFF00"/>
<rect x="128" y="203" width="1" height="1" fill="#FFFF00"/>
<rect x="129" y="203" width="1" height="1" fill="#FFFF00"/>
<rect x="130" y="203" width="1" height="1" fill="#FFFF00"/>
<rect x="131" y="202" width="1" height="1" fill="#FFFF00"/>
<rect x="132" y="202" width="1" height="1" fill="#FFFF00"/>
<rect x="133" y="203" width="1" height="1" fill="#FFFF00"/>
<rect x="134" y="203" width="1" height="1" fill="#FFFF00"/>
<rect x="135" y="203" width="1" height="1" fill="#FFFF00"/>
<rect x="136" y="202" width="1" height="1" fill="#FFFF00"/>
<rect x="137" y="202" width="1" height="1" fill="#FFFF00"/>
<rect x="138" y="203" width="1" height="1" fill="#FFFF00"/>
<rect x="139" y="203" width="1" height="1" fill="#FFFF00"/>
<rect x="140" y="203" width="1" height="1" fill="#FFFF00"/>
<rect x="141" y="203" width="1" height="1" fill="#FFFF00"/>
<rect x="142" y="203" width="1" height="1" fill="#FFFF00"/>
<rect x="143" y="203" width="1" height="1" fill="#FFFF00"/>
<rect x="144" y="203" width="1" height="1" fill="#FFFF00"/>
<rect x="145" y="203" width="1" height="1" fill="#FFFF00"/>
<rect x="146" y="203" width="1" height="1" fill="#FFFF00"/>
<rect x="147" y="203" width="1" height="1" fill="#FFFF00"/>
<rect x="148" y="203" width="1" height="1" fill="#FFFF00"/>
<rect x="149" y="203" width="1" height="1" fill="#FFFF00"/>
<rect x="150" y="203" width="1" height="1" fill="#FFFF00"/>
<rect x="151" y="203" width="1" height="1" fill="#FFFF00"/>
<rect x="152" y="203" width="1" height="1" fill="#FFFF00"/>
<rect x="153" y="203" width="1" height="1" fill="#FFFF00"/>
<rect x="154" y="203" width="1" height="1" fill="#FFFF00"/>
<rect x="155" y="203" width="1" height="1" fill="#FFFF00"/>
<rect x="156" y="203" width="1" height="1" fill="#FFFF00"/>
<rect x="157" y="203" width="1" height="1" fill="#FFFF00"/>
<rect x="158" y="203" width="1" height="1" fill="#FFFF00"/>
<rect x="159" y="203" width="1" height="1" fill="#FFFF00"/>
<rect x="160" y="203" width="1" height="1" fill="#FFFF00"/>
<rect x="161" y="203" width="1" height="1" fill="#FFFF00"/>
<rect x="162" y="203" width="1" height="1" fill="#FFFF00"/>
<rect x="163" y="203" width="1" height="1" fill="#FFFF00"/>
<rect x="164" y="203" width="1" height="1" fill="#FFFF00"/>
<rect x="165" y="203" width="1" height="1" fill="#FFFF00"/>
<rect x="166" y="203" width="1" height="1" fill="#FFFF00"/>
<rect x="167" y="203" width="1" height="1" fill="#FFFF00"/>
<rect x="168" y="203" width="1" height="1" fill="#FFFF00"/>
<rect x="169" y="203" width="1" height="1" fill="#FFFF00"/>
<rect x="170" y="203" width="1" height="1" fill="#FFFF00"/>
<rect x="171" y="203" width="1" height="1" fill="#FFFF00"/>
<rect x="172" y="203" width="1" height="1" fill="#FFFF00"/>
<rect x="173" y="203" width="1" height="1" fill="#FFFF00"/>
<rect x="174" y="203" width="1" height="1" fill="#FFFF00"/>
<rect x="175" y="203" width="1" height="1" fill="#FFFF00"/>
<rect x="176" y="203" width="1" height="1" fill="#FFFF00"/>
<rect x="177" y="203" width="1" height="1" fill="#FFFF00"/>
<rect x="178" y="203" width="1" height="1" fill="#FFFF00"/>
<rect x="179" y="204" width="1" height="1" fill="#FFFF00"/>
<rect x="180" y="204" width="1" height="1" fill="#FFFF00"/>
<rect x="181" y="203" width="1" height="1" fill="#FFFF00"/>
<rect x="182" y="203" width="1" height="1" fill="#FFFF00"/>
<rect x="183" y="203" width="1" height="1" fill="#FFFF00"/>
<rect x="184" y="203" width="1" height="1" fill="#FFFF00"/>
<rect x="185" y="203" width="1" height="1" fill="#FFFF00"/>
<rect x="186" y="203" width="1" height="1" fill="#FFFF00"/>
<rect x="187" y="203" width="1" height="1" fill="#FFFF00"/>
<rect x="188" y="203" width="1" height="1" fill="#FFFF00"/>
<rect x="189" y="203" width="1" height="1" fill="#FFFF00"/>
<rect x="190" y="203" width="1" height="1" fill="#FFFF00"/>
<rect x="191" y="203" width="1" height="1" fill="#FFFF00"/>
<rect x="192" y="203" width="1" height="1" fill="#FFFF00"/>
<rect x="193" y="203" width="1" height="1" fill="#FFFF00"/>
<rect x="194" y="203" width="1" height="1" fill="#FFFF00"/>
<rect x="195" y="203" width="1" height="1" fill="#FFFF00"/>
<rect x="196" y="203" width="1" height="1" fill="#FFFF00"/>
<rect x="197" y="203" width="1" height="1" fill="#FFFF00"/>
<rect x="198" y="203" width="1" height="1" fill="#FFFF00"/>
<rect x="199" y="203" width="1" height="1" fill="#FFFF00"/>
<rect x="200" y="203" width="1" height="1" fill="#FFFF00"/>
<rect x="201" y="203" width="1" height="1" fill="#FFFF00"/>
<rect x="202" y="203" width="1" height="1" fill="#FFFF00"/>
<rect x="203" y="203" width="1" height="1" fill="#FFFF00"/>
<rect x="204" y="203" width="1" height="1" fill="#FFFF00"/>
<rect x="205" y="203" width="1" height="1" fill="#FFFF00"/>
<rect x="206" y="203" width="1" height="1" fill="#FFFF00"/>
<rect x="207" y="203" width="1" height="1" fill="#FFFF00"/>
<rect x="208" y="203" width="1" height="1" fill="#FFFF00"/>
<rect x="209" y="203" width="1" height="1" fill="#FFFF00"/>
<rect x="210" y="203" width="1" height="1" fill="#FFFF00"/>
<rect x="211" y="203" width="1" height="1" fill="#FFFF00"/>
<rect x="212" y="203" width="1" height="1" fill="#FFFF00"/>
<rect x="213" y="203" width="1" height="1" fill="#FFFF00"/>
<rect x="214" y="203" width="1" height="1" fill="#FFFF00"/>
<rect x="215" y="203" width="1" height="1" fill="#FFFF00"/>
<rect x="216" y="203" width="1" height="1" fill="#FFFF00"/>
<rect x="217" y="203" width="1" height="1" fill="#FFFF00"/>
<rect x="218" y="203" width="1" height="1" fill="#FFFF00"/>
<rect x="219" y="203" width="1" height="1" fill="#FFFF00"/>
<rect x="220" y="203" width="1" height="1" fill="#FFFF00"/>
<rect x="221" y="203" width="1" height="1" fill="#FFFF00"/>
<rect x="222" y="203" width="1" height="1" fill="#FFFF00"/>
<rect x="223" y="203" width="1" height="1" fill="#FFFF00"/>
<rect x="224" y="203" width="1" height="1" fill="#FFFF00"/>
<rect x="225" y="203" width="1" height="1" fill="#FFFF00"/>
<rect x="226" y="203" width="1" height="1" fill="#FFFF00"/>
<rect x="227" y="203" width="1" height="1" fill="#FFFF00"/>
<rect x="228" y="203" width="1" height="1" fill="#FFFF00"/>
<rect x="229" y="203" width="1" height="1" fill="#FFFF00"/>
<rect x="230" y="203" width="1" height="1" fill="#FFFF00"/>
<rect x="231" y="203" width="1" height="1" fill="#FFFF00"/>
<rect x="232" y="203" width="1" height="1" fill="#FFFF00"/>
<rect x="233" y="203" width="1" height="1" fill="#FFFF00"/>
<rect x="234" y="203" width="1" height="1" fill="#FFFF00"/>
<rect x="235" y="203" width="1" height="1" fill="#FFFF00"/>
<rect x="236" y="203" width="1" height="1" fill="#FFFF00"/>
<rect x="237" y="203" width="1" height="1" fill="#FFFF00"/>
<rect x="238" y="203" width="1" height="1" fill="#FFFF00"/>
<rect x="239" y="203" width="1" height="1" fill="#FFFF00"/>
<rect x="240" y="203" width="1" height="1" fill="#FFFF00"/>
<rect x="241" y="203" width="1" height="1" fill="#FFFF00"/>
<rect x="242" y="203" width="1" height="1" fill="#FFFF00"/>
<rect x="243" y="203" width="1" height="1" fill="#FFFF00"/>
<rect x="244" y="203" width="1" height="1" fill="#FFFF00"/>
<rect x="245" y="203" width="1" height="1" fill="#FFFF00"/>
<rect x="246" y="203" width="1" height="1" fill="#FFFF00"/>
<rect x="247" y="203" width="1" height="1" fill="#FFFF00"/>
<rect x="248" y="203" width="1" height="1" fill="#FFFF00"/>
<rect x="249" y="203" width="1" height="1" fill="#FFFF00"/>
<rect x="250" y="203" width="1" height="1" fill="#FFFF00"/>
<rect x="251" y="203" width="1" height="1" fill="#FFFF00"/>
<rect x="252" y="203" width="1" height="1" fill="#FFFF00"/>
<rect x="253" y="203" width="1" height="1" fill="#FFFF00"/>
<rect x="254" y="203" width="1" height="1" fill="#FFFF00"/>
<rect x="255" y="203" width="1" height="1" fill="#FFFF00"/>
<rect x="256" y="203" width="1" height="1" fill="#FFFF00"/>
<rect x="257" y="203" width="1" height="1" fill="#FFFF00"/>
<rect x="258" y="203" width="1" height="1" fill="#FFFF00"/>
<rect x="259" y="203" width="1" height="1" fill="#FFFF00"/>
<rect x="260" y="203" width="1" height="1" fill="#FFFF00"/>
<rect x="261" y="203" width="1" height="1" fill="#FFFF00"/>
<rect x="262" y="203" width="1" height="1" fill="#FFFF00"/>
<rect x="263" y="203" width="1" height="1" fill="#FFFF00"/>
<rect x="264" y="203" width="1" height="1" fill="#FFFF00"/>
<rect x="265" y="203" width="1" height="1" fill="#FFFF00"/>
<rect x="266" y="203" width="1" height="1" fill="#FFFF00"/>
<rect x="267" y="203" width="1" height="1" fill="#FFFF00"/>
<rect x="268" y="203" width="1" height="1" fill="#FFFF00"/>
<rect x="269" y="203" width="1" height="1" fill="#FFFF00"/>
<rect x="270" y="203" width="1" height="1" fill="#FFFF00"/>
<rect x="271" y="203" width="1" height="1" fill="#FFFF00"/>
<rect x="272" y="203" width="1" height="1" fill="#FFFF00"/>
<rect x="273" y="203" width="1" height="1" fill="#FFFF00"/>
<rect x="274" y="203" width="1" height="1" fill="#FFFF00"/>
<rect x="275" y="203" width="1" height="1" fill="#FFFF00"/>
<rect x="276" y="203" width="1" height="1" fill="#FFFF00"/>
<rect x="277" y="203" width="1" height="1" fill="#FFFF00"/>
<rect x="278" y="203" width="1" height="1" fill="#FFFF00"/>
<rect x="279" y="203" width="1" height="1" fill="#FFFF00"/>
<rect x="280" y="203" width="1" height="1" fill="#FFFF00"/>
<rect x="281" y="203" width="1" height="1" fill="#FFFF00"/>
<rect x="282" y="203" width="1" height="1" fill="#FFFF00"/>
<rect x="283" y="203" width="1" height="1" fill="#FFFF00"/>
<rect x="284" y="203" width="1" height="1" fill="#FFFF00"/>
<rect x="285" y="203" width="1" height="1" fill="#FFFF00"/>
<rect x="286" y="203" width="1" height="1" fill="#FFFF00"/>
<rect x="287" y="203" width="1" height="1" fill="#FFFF00"/>
<rect x="288" y="203" width="1" height="1" fill="#FFFF00"/>
<rect x="289" y="203" width="1" height="1" fill="#FFFF00"/>
<rect x="290" y="203" width="1" height="1" fill="#FFFF00"/>
<rect x="291" y="203" width="1" height="1" fill="#FFFF00"/>
<rect x="292" y="203" width="1" height="1" fill="#FFFF00"/>
<rect x="293" y="203" width="1" height="1" fill="#FFFF00"/>
<rect x="294" y="203" width="1" height="1" fill="#FFFF00"/>
<rect x="295" y="203" width="1" height="1" fill="#FFFF00"/>
<rect x="296" y="203" width="1" height="1" fill="#FFFF00"/>
<rect x="297" y="203" width="1" height="1" fill="#FFFF00"/>
<rect x="298" y="203" width="1" height="1" fill="#FFFF00"/>
<rect x="299" y="203" width="1" height="1" fill="#FFFF00"/>
<rect x="300" y="203" width="1" height="1" fill="#FFFF00"/>
<rect x="301" y="203" width="1" height="1" fill="#FFFF00"/>
<rect x="302" y="203" width="1" height="1" fill="#FFFF00"/>
<rect x="303" y="203" width="1" height="1" fill="#FFFF00"/>
<rect x="304" y="203" width="1" height="1" fill="#FFFF00"/>
<rect x="305" y="203" width="1" height="1" fill="#FFFF00"/>
<rect x="306" y="203" width="1" height="1" fill="#FFFF00"/>
<rect x="307" y="203" width="1" height="1" fill="#FFFF00"/>
<rect x="308" y="203" width="1" height="1" fill="#FFFF00"/>
<rect x="309" y="203" width="1" height="1" fill="#FFFF00"/>
<rect x="310" y="203" width="1" height="1" fill="#FFFF00"/>
<rect x="311" y="203" width="1" height="1" fill="#FFFF00"/>
<rect x="312" y="203" width="1" height="1" fill="#FFFF00"/>
<rect x="313" y="203" width="1" height="1" fill="#FFFF00"/>
<rect x="314" y="203" width="1" height="1" fill="#FFFF00"/>
<rect x="315" y="203" width="1" height="1" fill="#FFFF00"/>
<rect x="316" y="203" width="1" height="1" fill="#FFFF00"/>
<rect x="317" y="203" width="1" height="1" fill="#FFFF00"/>
<rect x="318" y="203" width="1" height="1" fill="#FFFF00"/>
<rect x="319" y="203" width="1" height="1" fill="#FFFF00"/>
<rect x="320" y="203" width="1" height="1" fill="#FFFF00"/>
<rect x="321" y="203" width="1" height="1" fill="#FFFF00"/>
<rect x="322" y="203" width="1" height="1" fill="#FFFF00"/>
<rect x="323" y="203" width="1" height="1" fill="#FFFF00"/>
<rect x="324" y="203" width="1" height="1" fill="#FFFF00"/>
<rect x="325" y="203" width="1" height="1" fill="#FFFF00"/>
<rect x="326" y="203" width="1" height="1" fill="#FFFF00"/>
<rect x="327" y="203" width="1" height="1" fill="#FFFF00"/>
<rect x="328" y="203" width="1" height="1" fill="#FFFF00"/>
<rect x="329" y="203" width="1" height="1" fill="#FFFF00"/>
<rect x="330" y="203" width="1" height="1" fill="#FFFF00"/>
<rect x="331" y="203" width="1" height="1" fill="#FFFF00"/>
<rect x="332" y="203" width="1" height="1" fill="#FFFF00"/>
<rect x="333" y="203" width="1" height="1" fill="#FFFF00"/>
</svg><div class="yl" style="top:131px">18<span class="xx">X</span></div>
<div class="yl" style="top:163px">16<span class="xx">X</span></div>
<div class="yl" style="top:195px">14<span class="xx">X</span></div>
<div class="yl" style="top:227px">12<span class="xx">X</span></div>
<div class="yl" style="top:259px">10<span class="xx">X</span></div>
<div class="yl" style="top:290px">8<span class="xx">X</span></div>
<div class="yl" style="top:322px">6<span class="xx">X</span></div>
<div class="yl" style="top:354px">4<span class="xx">X</span></div>
<div class="yl" style="top:386px">2<span class="xx">X</span></div>
<div class="yr" style="top:131px">24</div>
<div class="yr" style="top:178px">20</div>
<div class="yr" style="top:226px">16</div>
<div class="yr" style="top:274px">12</div>
<div class="yr" style="top:321px">8</div>
<div class="yr" style="top:369px">4</div>
<div class="xl" style="left:35px">0.0</div>
<div class="xl" style="left:75px">0.5</div>
<div class="xl" style="left:116px">1.0</div>
<div class="xl" style="left:156px">1.5</div>
<div class="xl" style="left:197px">2.0</div>
<div class="xl" style="left:237px">2.5</div>
<div class="xl" style="left:278px">3.0</div>
<div class="xl" style="left:318px">3.5</div>
<div class="xl" style="left:359px">4.0</div>
<div class="xl" style="left:400px">4.5</div>
<!-- progress -->
<div class="a prog"></div>
<div class="a" style="left:18px;top:451px;width:414px;height:5px;background:repeating-linear-gradient(to right,transparent 0 6px,#fff 6px 8px),linear-gradient(#6CDC6C,#1ECB1E 40%,#1ECB1E 60%,#6CDC6C)"></div>
<!-- log -->
<div class="a log"></div>
<div class="a logline" style="top:465px">[19:34:23]   Lade Zeit: 15.37 Sekunden</div>
<div class="a logline" style="top:479px">[19:34:23]   Erkennungszeit: 0.01 Sekunden</div>
<div class="a logline" style="top:493px">[19:34:23]   Verstrichene Zeit:  0:17</div>
<div class="a" style="left:413px;top:463px;width:18px;height:54px;background:linear-gradient(to right,#F3F1EC,#FEFEFB 70%,#EEEDE5)"></div>
<div class="a sb" style="left:413px;top:464px;width:17px;height:16px"></div>
<svg class="a" style="left:413px;top:464px" width="17" height="16"><path d="M5,9.5 L8.5,6 L12,9.5" stroke="#4D6185" stroke-width="2" fill="none"/></svg>
<div class="a sb" style="left:413px;top:492px;width:17px;height:6px;border-bottom:none;border-radius:2px 2px 0 0"></div>
<div class="a sb" style="left:413px;top:499px;width:17px;height:16px"></div>
<svg class="a" style="left:413px;top:499px" width="17" height="16"><path d="M5,6.5 L8.5,10 L12,6.5" stroke="#4D6185" stroke-width="2" fill="none"/></svg>
<!-- right groups -->
<div class="a grp" style="left:444px;top:132px;width:94px;height:170px"></div>
<div class="a gt" style="left:452px;top:125px;background:#fcfcfd">Geschwindigkeit</div>
<div class="a lblc" style="left:461px;top:144px;width:59px"><span>Durchschnittlich:</span></div>
<div class="a val" style="left:461px;top:155px;width:59px;height:18px">9.15x</div>
<div class="a lblc" style="left:445px;top:182px;width:90px"><span>Start:</span></div>
<div class="a val" style="left:461px;top:194px;width:59px;height:18px">5.18x</div>
<div class="a lblc" style="left:445px;top:220px;width:90px"><span>Ende:</span></div>
<div class="a val" style="left:461px;top:232px;width:59px;height:18px">12.18x</div>
<div class="a lblc" style="left:445px;top:256px;width:90px"><span>Typ:</span></div>
<div class="a val" style="left:461px;top:272px;width:59px;height:18px">CAV</div>
<div class="a grp" style="left:542px;top:132px;width:88px;height:125px"></div>
<div class="a gt" style="left:550px;top:125px;background:#fcfcfd">Zugriffszeiten</div>
<div class="a lblc" style="left:540px;top:144px;width:90px"><span>Zufällig:</span></div>
<div class="a val" style="left:556px;top:155px;width:59px;height:18px">122 ms</div>
<div class="a lblc" style="left:540px;top:182px;width:90px"><span>1/3:</span></div>
<div class="a val" style="left:556px;top:194px;width:59px;height:18px">139 ms</div>
<div class="a lblc" style="left:540px;top:218px;width:90px"><span>Voll:</span></div>
<div class="a val" style="left:556px;top:230px;width:59px;height:18px">214 ms</div>
<div class="a grp" style="left:542px;top:275px;width:88px;height:168px"></div>
<div class="a gt" style="left:550px;top:267px;background:#f9f9f8">CPU Belastung</div>
<div class="a lblc" style="left:540px;top:287px;width:90px"><span>1 x:</span></div>
<div class="a val" style="left:556px;top:298px;width:59px;height:18px">5 %</div>
<div class="a lblc" style="left:540px;top:326px;width:90px"><span>2 x:</span></div>
<div class="a val" style="left:556px;top:337px;width:59px;height:18px">8 %</div>
<div class="a lblc" style="left:540px;top:366px;width:90px"><span>4 x:</span></div>
<div class="a val" style="left:556px;top:378px;width:59px;height:18px">23 %</div>
<div class="a lblc" style="left:540px;top:404px;width:90px"><span>8 x:</span></div>
<div class="a val" style="left:556px;top:416px;width:59px;height:18px">n/a</div>
<div class="a grp" style="left:444px;top:320px;width:94px;height:92px"></div>
<div class="a gt" style="left:452px;top:312px;background:#f8f8f6">DAE Qualität</div>
<div class="a val" style="left:461px;top:336px;width:59px;height:18px"></div>
<div class="a lblc" style="left:446px;top:363px;width:90px"><span>Genauer</span></div>
<div class="a lblc" style="left:446px;top:376px;width:90px"><span>Stream</span></div>
<div class="a" style="left:485px;top:394px;width:13px;height:13px;border:1px solid #1C5180;background:linear-gradient(135deg,#DCDCD7,#FFFFFF)"></div>
<div class="a grp" style="left:444px;top:429px;width:94px;height:92px"></div>
<div class="a gt" style="left:452px;top:422px;background:#f6f5f2">Disktyp:</div>
<div class="a lblc" style="left:445px;top:436px;width:90px"><span>Typ:</span></div>
<div class="a val" style="left:458px;top:451px;width:65px;height:18px">DVD-R</div>
<div class="a lblc" style="left:445px;top:476px;width:90px"><span>Länge:</span></div>
<div class="a val" style="left:458px;top:492px;width:65px;height:18px">4.13 GB</div>
<div class="a grp" style="left:542px;top:461px;width:88px;height:60px"></div>
<div class="a gt" style="left:550px;top:453px;background:#f5f4f1">Schnittstelle</div>
<div class="a lblc" style="left:540px;top:476px;width:90px"><span>Burst-Rate:</span></div>
<div class="a val" style="left:556px;top:492px;width:59px;height:18px">43 MB/s</div>
</body></html>
